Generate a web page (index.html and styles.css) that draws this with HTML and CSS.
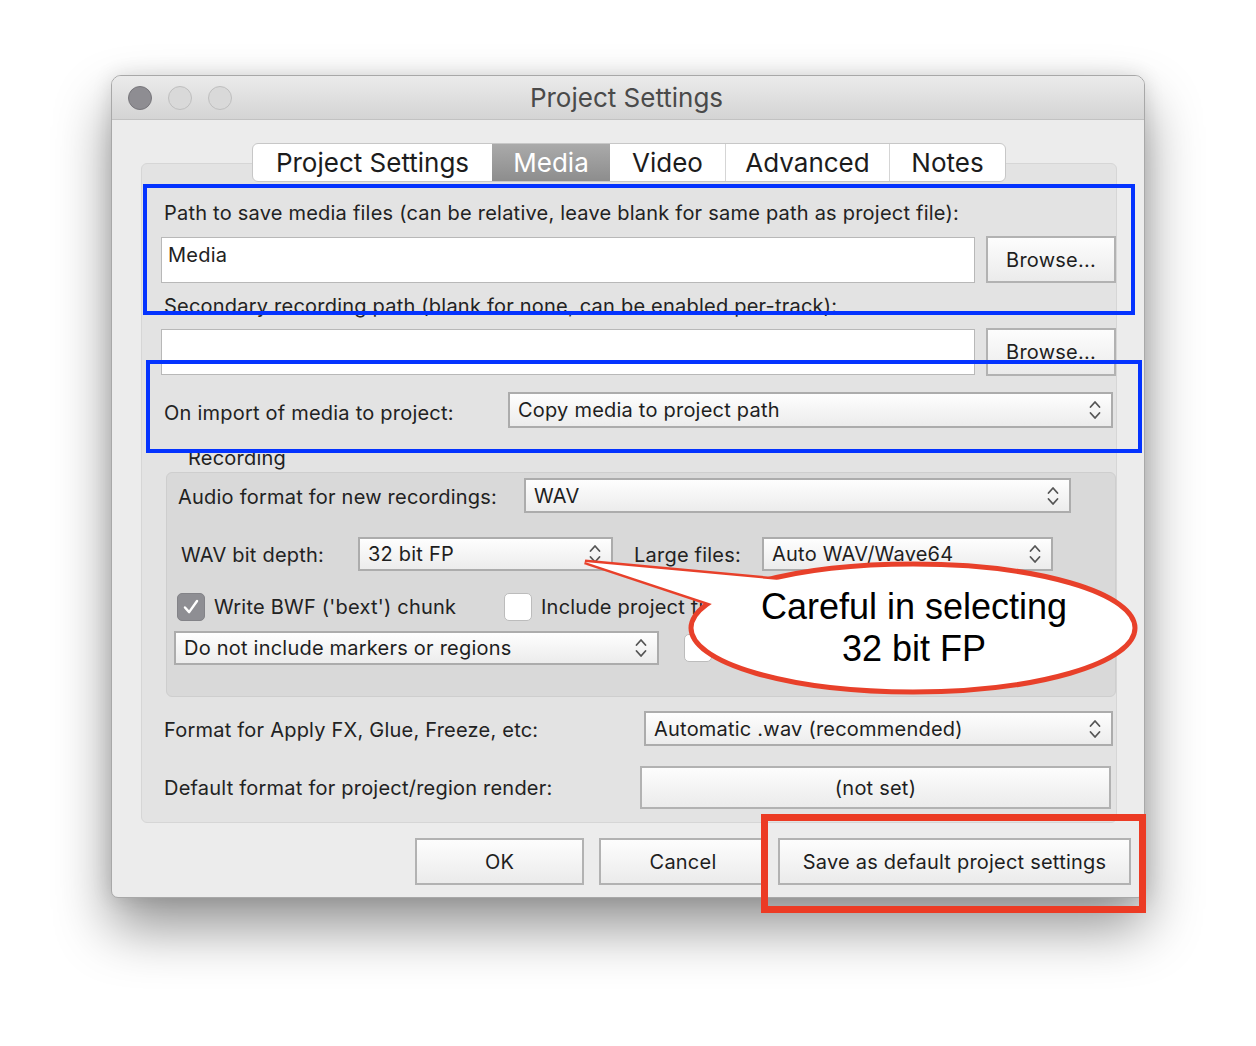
FILE: index.html
```html
<!DOCTYPE html>
<html>
<head>
<meta charset="utf-8">
<title>Project Settings</title>
<link rel="stylesheet" href="styles.css">
</head>
<body>
<div class="stage">
  <div class="window">
    <div class="titlebar">
      <div class="lights">
        <span class="light close"></span>
        <span class="light"></span>
        <span class="light"></span>
      </div>
      <div class="title">Project Settings</div>
      <div></div>
    </div>
    <div class="body">
      <div class="tabs">
        <div class="tab t-ps">Project Settings</div>
        <div class="tab t-media active">Media</div>
        <div class="tab t-video">Video</div>
        <div class="tab t-adv">Advanced</div>
        <div class="tab t-notes">Notes</div>
      </div>
      <div class="panel">
        <div class="label">Path to save media files (can be relative, leave blank for same path as project file):</div>
        <div class="pathrow p1">
          <div class="input">Media</div>
          <div class="btn browse">Browse...</div>
        </div>
        <div class="label l2">Secondary recording path (blank for none, can be enabled per-track):</div>
        <div class="pathrow p2">
          <div class="input"></div>
          <div class="btn browse">Browse...</div>
        </div>
        <div class="row import">
          <div class="label w-import">On import of media to project:</div>
          <div class="select s-import"><span>Copy media to project path</span><svg class="chev" viewBox="0 0 12 22"><path d="M1.5 8 L6 3 L10.5 8 M1.5 14 L6 19 L10.5 14"/></svg></div>
        </div>
        <div class="grouptitle">Recording</div>
        <div class="group">
          <div class="row g1">
            <div class="label w-afmt">Audio format for new recordings:</div>
            <div class="select s-wav"><span>WAV</span><svg class="chev" viewBox="0 0 12 22"><path d="M1.5 8 L6 3 L10.5 8 M1.5 14 L6 19 L10.5 14"/></svg></div>
          </div>
          <div class="row g2">
            <div class="label w-depth">WAV bit depth:</div>
            <div class="select s-depth"><span>32 bit FP</span><svg class="chev" viewBox="0 0 12 22"><path d="M1.5 8 L6 3 L10.5 8 M1.5 14 L6 19 L10.5 14"/></svg></div>
            <div class="label w-large">Large files:</div>
            <div class="select s-large"><span>Auto WAV/Wave64</span><svg class="chev" viewBox="0 0 12 22"><path d="M1.5 8 L6 3 L10.5 8 M1.5 14 L6 19 L10.5 14"/></svg></div>
          </div>
          <div class="row g3">
            <div class="check-item ci1">
              <span class="cb checked"><svg viewBox="0 0 28 28"><path d="M7.5 14.5 L12 19.5 L20.5 7.5"/></svg></span>
              <span class="cb-label">Write BWF ('bext') chunk</span>
            </div>
            <div class="check-item">
              <span class="cb"></span>
              <span class="cb-label">Include project fi</span>
            </div>
          </div>
          <div class="row g4">
            <div class="select s-markers"><span>Do not include markers or regions</span><svg class="chev" viewBox="0 0 12 22"><path d="M1.5 8 L6 3 L10.5 8 M1.5 14 L6 19 L10.5 14"/></svg></div>
            <div class="check-item ci3">
              <span class="cb"></span>
            </div>
          </div>
        </div>
        <div class="row fx">
          <div class="label w-fx">Format for Apply FX, Glue, Freeze, etc:</div>
          <div class="select s-fx"><span>Automatic .wav (recommended)</span><svg class="chev" viewBox="0 0 12 22"><path d="M1.5 8 L6 3 L10.5 8 M1.5 14 L6 19 L10.5 14"/></svg></div>
        </div>
        <div class="row render">
          <div class="label w-render">Default format for project/region render:</div>
          <div class="btn notset">(not set)</div>
        </div>
      </div>
      <div class="buttons">
        <div class="btn b-ok">OK</div>
        <div class="btn b-cancel">Cancel</div>
        <div class="btn b-save">Save as default project settings</div>
      </div>
    </div>

    <div class="mark blue b1"></div>
    <div class="mark blue b2"></div>
    <div class="mark red"></div>
    <svg class="callout" viewBox="0 0 580 150" width="580" height="150">
      <polygon class="ptr" points="15,12 220,31 160,60"/>
      <ellipse class="ell" cx="343" cy="78" rx="222" ry="64"/>
      <polygon class="ptr-fill" points="15,12 220,31 160,60"/>
    </svg>
    <div class="callout-text">Careful in selecting<br>32 bit FP</div>
  </div>
</div>
</body>
</html>
```

FILE: styles.css
```css
* { box-sizing: border-box; }
html, body { margin: 0; padding: 0; background: #ffffff; }
body {
  font-family: Inter, "Liberation Sans", "DejaVu Sans", sans-serif;
  font-size: 20px;
  letter-spacing: 0.22px;
  color: #222;
}
.stage {
  padding: 75px 0 0 111px;
  height: 1046px;
}
.window {
  position: relative;
  width: 1034px;
  height: 823px;
  background: #ececec;
  border: 1px solid #a8a8a8;
  border-radius: 10px 10px 7px 7px;
  box-shadow: 0 30px 55px rgba(0,0,0,0.42), 0 0 20px rgba(0,0,0,0.12);
  display: flex;
  flex-direction: column;
}
.titlebar {
  flex: none;
  height: 44px;
  display: grid;
  grid-template-columns: 1fr auto 1fr;
  align-items: center;
  background: linear-gradient(#ebebeb, #d4d4d4);
  border-bottom: 1px solid #c2c2c2;
  border-radius: 9px 9px 0 0;
}
.lights { display: flex; gap: 16px; padding-left: 16px; }
.light {
  width: 24px; height: 24px; border-radius: 50%;
  background: #d9d9d9; border: 1px solid #bfbfbf;
}
.light.close { background: #8e8d92; border-color: #77767b; }
.title {
  font-size: 26px;
  letter-spacing: 0;
  color: #4a4a4a;
  line-height: 44px;
  padding-right: 3px;
}
.body {
  flex: 1;
  display: flex;
  flex-direction: column;
  padding: 23px 27px 12px 29px;
}
.tabs {
  align-self: center;
  display: flex;
  height: 39px;
  background: #fff;
  border: 1px solid #c7c7c7;
  border-radius: 6px;
  position: relative;
  z-index: 1;
  margin-bottom: -19px;
  overflow: hidden;
}
.tab {
  font-size: 26px;
  letter-spacing: 0;
  line-height: 38px;
  text-align: center;
  color: #1c1c1c;
  border-left: 1px solid #d5d5d5;
}
.tab:first-child { border-left: none; }
.tab.active {
  background: linear-gradient(#aaaaaa, #8d8d8d);
  color: #fff;
  border-left: none;
}
.tab.active + .tab { border-left: none; }
.t-ps { width: 239px; }
.t-media { width: 118px; }
.t-video { width: 115px; }
.t-adv { width: 164px; }
.t-notes { width: 116px; }

.panel {
  background: #e3e3e3;
  border: 1px solid #d6d6d6;
  border-radius: 6px;
  padding: 37px 0 13px 19px;
  display: flex;
  flex-direction: column;
}
.label {
  line-height: 24px;
  padding-left: 3px;
  white-space: nowrap;
}
.l2 { margin-top: 11px; }
.pathrow {
  display: flex;
  align-items: center;
  gap: 11px;
  height: 47px;
  margin-top: 11px;
}
.pathrow.p2 { height: 48px; margin-top: 10px; }
.input {
  flex: 1;
  height: 46px;
  background: #fff;
  border: 1px solid #b8b8b8;
  padding: 5px 6px 0;
  line-height: 24px;
}
.btn {
  display: flex;
  align-items: center;
  justify-content: center;
  background: linear-gradient(#fdfdfd, #ebebeb);
  border: 2px solid #b2b2b2;
  color: #1e1e1e;
  white-space: nowrap;
}
.browse { width: 130px; height: 100%; }
.row { display: flex; align-items: center; }
.import { margin-top: 16px; height: 36px; }
.w-import { width: 347px; padding-top: 5px; }
.select {
  display: flex;
  align-items: center;
  justify-content: space-between;
  background: linear-gradient(#fefefe, #ececec);
  border: 2px solid #acacac;
  padding: 0 10px 0 8px;
  height: 100%;
  color: #1e1e1e;
  white-space: nowrap;
}
.chev { width: 12px; height: 22px; flex: none; }
.chev path { fill: none; stroke: #555; stroke-width: 1.8; stroke-linecap: round; stroke-linejoin: round; }
.s-import { width: 605px; }
.grouptitle {
  margin-top: 18px;
  line-height: 24px;
  padding-left: 27px;
}
.group {
  margin-top: 2px;
  margin-left: 5px;
  background: #d9d9d9;
  border: 1px solid #cecece;
  border-radius: 6px;
  padding: 5px 0 31px 0;
  display: flex;
  flex-direction: column;
}
.g1 { height: 35px; }
.w-afmt { width: 357px; padding-left: 11px; padding-top: 2px; }
.s-wav { width: 547px; }
.g2 { height: 34px; margin-top: 24px; }
.w-depth { width: 191px; padding-left: 14px; padding-top: 2px; }
.s-depth { width: 255px; }
.w-large { width: 149px; padding-left: 21px; padding-top: 2px; }
.s-large { width: 291px; }
.g3 { height: 28px; margin-top: 22px; }
.check-item { display: flex; align-items: center; gap: 9px; }
.ci1 { width: 337px; padding-left: 10px; }
.cb {
  width: 28px; height: 28px; flex: none;
  border-radius: 5px;
  background: #fff;
  border: 1px solid #bcbcbc;
}
.cb.checked { background: #8e8e93; border-color: #838388; }
.cb svg { width: 100%; height: 100%; display: block; }
.cb svg path { fill: none; stroke: #fff; stroke-width: 2.6; stroke-linecap: round; stroke-linejoin: round; }
.cb-label { white-space: nowrap; line-height: 24px; }
.g4 { height: 34px; margin-top: 10px; }
.s-markers { width: 485px; margin-left: 7px; }
.ci3 { margin-left: 25px; }
.fx { height: 35px; margin-top: 14px; }
.w-fx { width: 483px; padding-top: 2px; }
.s-fx { width: 469px; }
.render { height: 43px; margin-top: 20px; }
.w-render { width: 479px; }
.notset { width: 471px; height: 100%; }

.buttons {
  display: flex;
  justify-content: flex-end;
  height: 47px;
  margin-top: 15px;
  margin-right: -14px;
}
.b-ok { width: 169px; }
.b-cancel { width: 168px; margin-left: 15px; }
.b-save { width: 353px; margin-left: 11px; }

.mark { position: absolute; pointer-events: none; z-index: 5; }
.blue { border: 4px solid #0433ff; }
.b1 { left: 31px; top: 108px; width: 992px; height: 131px; }
.b2 { left: 34px; top: 284px; width: 996px; height: 93px; }
.red { left: 649px; top: 738px; width: 385px; height: 99px; border: 7px solid #ec3b24; }
.callout {
  position: absolute;
  left: 458px;
  top: 474px;
  z-index: 6;
  overflow: visible;
}
.callout .ptr { fill: #fff; stroke: #e8402a; stroke-width: 5; stroke-linejoin: miter; }
.callout .ell { fill: #fff; stroke: #e8402a; stroke-width: 5; }
.callout .ptr-fill { fill: #fff; stroke: none; }
.callout-text {
  position: absolute;
  left: 602px;
  top: 510px;
  width: 400px;
  z-index: 7;
  text-align: center;
  font-family: "Liberation Sans", Arial, sans-serif;
  font-size: 36px;
  letter-spacing: 0;
  line-height: 42px;
  color: #000;
}
```
